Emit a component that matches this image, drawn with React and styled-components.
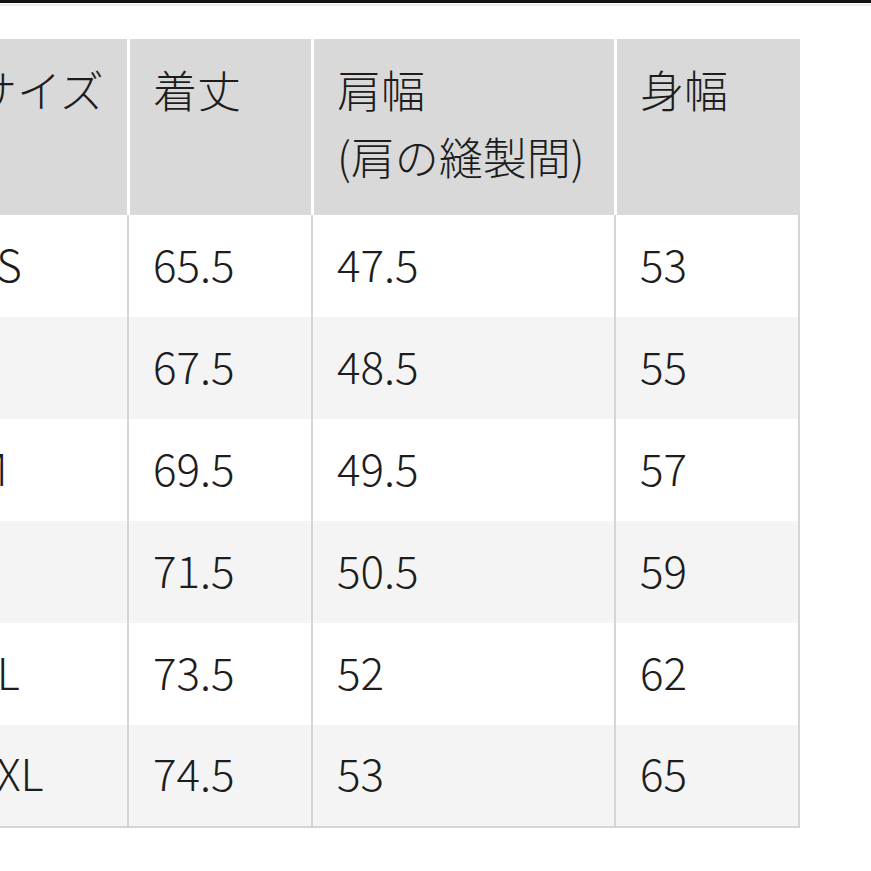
import React from 'react';
import styled, { createGlobalStyle } from 'styled-components';

const GlobalStyle = createGlobalStyle`
    html, body {
        margin: 0;
        padding: 0;
        background-color: #ffffff;
        overflow: hidden;
    }
`;

const Page = styled.div`
    width: 871px;
    height: 871px;
    overflow: hidden;
    font-family: "Noto Sans CJK JP", "Noto Sans", sans-serif;
    color: #1d1d1d;
`;

const TopBar = styled.div`
    height: 3px;
    background-color: #111111;
`;

const TopLine = styled.div`
    height: 2px;
    margin-top: 1px;
    background-color: #ededed;
`;

const Grid = styled.div`
    display: grid;
    grid-template-columns: 180px 184px 303px 186px;
    grid-template-rows: 176px repeat(5, 102px) 103px;
    margin-top: 33px;
    margin-left: -53px;
    width: 853px;
`;

const HeadCell = styled.div`
    box-sizing: border-box;
    background-color: #d9d9d9;
    border-left: 3px solid #ffffff;
    padding: 17px 0 0 23px;
    font-size: 44px;
    line-height: 67px;
    font-weight: 300;
    white-space: nowrap;
`;

const Cell = styled.div`
    box-sizing: border-box;
    display: flex;
    align-items: center;
    padding: 0 0 7px 24px;
    background-color: ${(p) => (p.$striped ? '#f4f4f4' : '#ffffff')};
    border-left: 2px solid #d5d5d5;
    border-right: ${(p) => (p.$last ? '2px solid #d5d5d5' : 'none')};
    border-bottom: ${(p) => (p.$bottom ? '2px solid #d5d5d5' : 'none')};
    font-size: 44px;
    font-weight: 300;
    white-space: nowrap;
`;

const ROWS = [
    ['XS', '65.5', '47.5', '53'],
    ['S', '67.5', '48.5', '55'],
    ['M', '69.5', '49.5', '57'],
    ['L', '71.5', '50.5', '59'],
    ['XL', '73.5', '52', '62'],
    ['XXL', '74.5', '53', '65'],
];

const App = () =>
{
    return (
        <>
            <GlobalStyle />
            <Page>
                <TopBar />
                <TopLine />
                <Grid>
                    <HeadCell>サイズ</HeadCell>
                    <HeadCell>着丈</HeadCell>
                    <HeadCell>
                        肩幅<br />(肩の縫製間)
                    </HeadCell>
                    <HeadCell>身幅</HeadCell>
                    {ROWS.map((row, r) =>
                        row.map((value, c) => (
                            <Cell
                                key={r + '-' + c}
                                $striped={r % 2 === 1}
                                $last={c === row.length - 1}
                                $bottom={r === ROWS.length - 1}
                            >
                                {value}
                            </Cell>
                        ))
                    )}
                </Grid>
            </Page>
        </>
    );
}

export default App;
